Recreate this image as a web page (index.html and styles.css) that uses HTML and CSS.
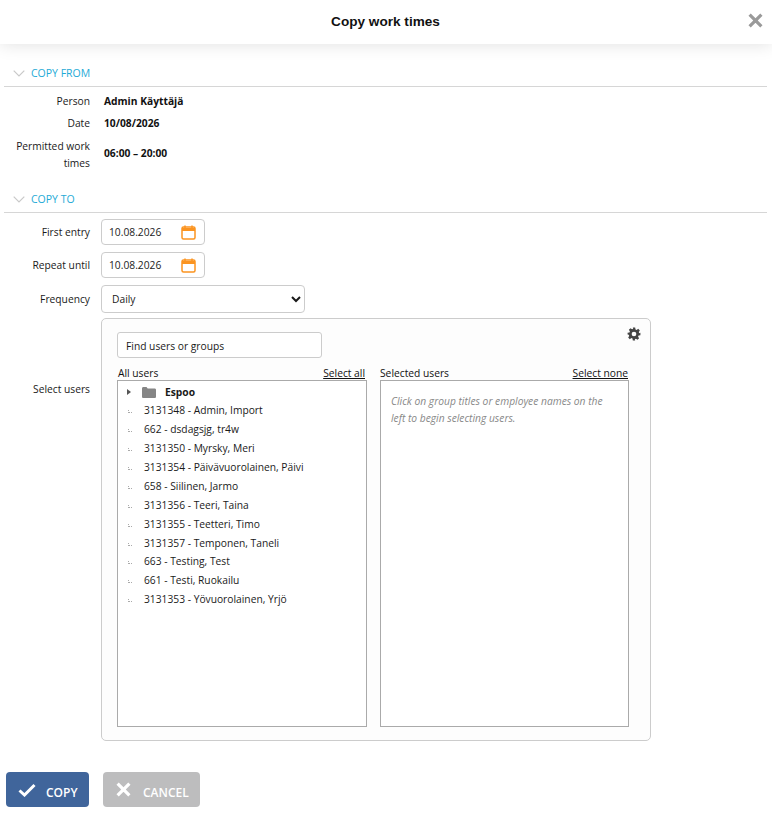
FILE: index.html
```html
<!DOCTYPE html>
<html lang="en">
<head>
    <meta charset="UTF-8">
    <meta name="viewport" content="width=device-width, initial-scale=1.0">
    <title>Copy work times</title>
    <link rel="stylesheet" href="styles.css">
</head>
<body>

    <!-- Dialog header -->
    <div class="dialog-header">
        <div class="dialog-title">Copy work times</div>
        <svg class="close-icon" viewBox="0 0 14 14" aria-label="Close"><path d="M1.5 1.5 12.5 12.5M12.5 1.5 1.5 12.5"/></svg>
    </div>

    <div class="dialog-body">
        <!-- Copy from -->
        <div class="section-title">
            <svg class="chevron" viewBox="0 0 12 7"><path d="M.7.7 6 6 11.3.7"/></svg>
            <span>COPY FROM</span>
        </div>
        <div class="info-rows">
            <div class="info-row info-person">
                <div class="row-label">Person</div>
                <div class="row-value">Admin Käyttäjä</div>
            </div>
            <div class="info-row info-date">
                <div class="row-label">Date</div>
                <div class="row-value">10/08/2026</div>
            </div>
            <div class="info-row info-times">
                <div class="row-label">Permitted work times</div>
                <div class="row-value">06:00 – 20:00</div>
            </div>
        </div>

        <!-- Copy to -->
        <div class="section-title">
            <svg class="chevron" viewBox="0 0 12 7"><path d="M.7.7 6 6 11.3.7"/></svg>
            <span>COPY TO</span>
        </div>
        <div class="form-rows">
            <div class="form-row">
                <div class="row-label">First entry</div>
                <div class="date-field">
                    <span>10.08.2026</span>
                    <svg class="calendar-icon" viewBox="0 0 15 15"><path d="M4 .5v3M11 .5v3"/><rect x="1" y="2" width="13" height="12" rx="1.5"/><path class="calendar-bar" d="M1 4.5h13"/></svg>
                </div>
            </div>
            <div class="form-row">
                <div class="row-label">Repeat until</div>
                <div class="date-field">
                    <span>10.08.2026</span>
                    <svg class="calendar-icon" viewBox="0 0 15 15"><path d="M4 .5v3M11 .5v3"/><rect x="1" y="2" width="13" height="12" rx="1.5"/><path class="calendar-bar" d="M1 4.5h13"/></svg>
                </div>
            </div>
            <div class="form-row">
                <div class="row-label">Frequency</div>
                <select class="frequency-select">
                    <option>Daily</option>
                </select>
            </div>
            <div class="form-row users-row">
                <div class="row-label">Select users</div>
                <div class="users-panel">
                    <svg class="gear-icon" viewBox="0 0 24 24"><path d="M10 1h4l.6 3.2 1.9.8 2.7-1.8 2.8 2.8-1.8 2.7.8 1.9L23 10v4l-3.2.6-.8 1.9 1.8 2.7-2.8 2.8-2.7-1.8-1.9.8L14 23h-4l-.6-3.2-1.9-.8-2.7 1.8L2 18l1.8-2.7-.8-1.9L1 13v-3l3.2-.6.8-1.9L3.2 4.8 6 2l2.7 1.8 1.9-.8z M12 8a4 4 0 1 0 0 8 4 4 0 0 0 0-8z" fill-rule="evenodd"/></svg>
                    <div class="user-search">Find users or groups</div>
                    <div class="user-lists">
                        <div class="user-col">
                            <div class="col-head">
                                <span>All users</span>
                                <a href="#">Select all</a>
                            </div>
                            <div class="user-box">
                                <div class="tree-group">
                                    <span class="tree-arrow"></span>
                                    <svg class="folder-icon" viewBox="0 0 14 11"><path d="M0 1.5C0 .7.6 0 1.3 0h3.2l1.2 1.5h7c.7 0 1.3.6 1.3 1.3V9.7c0 .7-.6 1.3-1.3 1.3H1.3C.6 11 0 10.4 0 9.7z"/></svg>
                                    <span>Espoo</span>
                                </div>
                                <div class="tree-item">3131348 - Admin, Import</div>
                                <div class="tree-item">662 - dsdagsjg, tr4w</div>
                                <div class="tree-item">3131350 - Myrsky, Meri</div>
                                <div class="tree-item">3131354 - Päivävuorolainen, Päivi</div>
                                <div class="tree-item">658 - Siilinen, Jarmo</div>
                                <div class="tree-item">3131356 - Teeri, Taina</div>
                                <div class="tree-item">3131355 - Teetteri, Timo</div>
                                <div class="tree-item">3131357 - Temponen, Taneli</div>
                                <div class="tree-item">663 - Testing, Test</div>
                                <div class="tree-item">661 - Testi, Ruokailu</div>
                                <div class="tree-item">3131353 - Yövuorolainen, Yrjö</div>
                            </div>
                        </div>
                        <div class="user-col selected-col">
                            <div class="col-head">
                                <span>Selected users</span>
                                <a href="#">Select none</a>
                            </div>
                            <div class="user-box">
                                <p class="empty-hint">Click on group titles or employee names on the left to begin selecting users.</p>
                            </div>
                        </div>
                    </div>
                </div>
            </div>
        </div>

        <!-- Actions -->
        <div class="actions">
            <button class="btn btn-copy">
                <svg viewBox="0 0 18 14"><path d="M1.5 7.5 6.5 12 16.5 2"/></svg>
                <span>COPY</span>
            </button>
            <button class="btn btn-cancel">
                <svg viewBox="0 0 14 14"><path d="M1.5 1.5 12.5 12.5M12.5 1.5 1.5 12.5"/></svg>
                <span>CANCEL</span>
            </button>
        </div>
    </div>

</body>
</html>
```

FILE: styles.css
```css
body {
    margin: 0;
    background-color: #fff;
    font-family: "Open Sans", "Noto Sans", sans-serif;
    font-size: 10.25px;
    color: #1a1a1a;
}

.dialog-header {
    height: 44px;
    display: flex;
    align-items: center;
    justify-content: center;
    position: relative;
    box-shadow: 0 0 18px rgba(0, 0, 0, 0.13);
    clip-path: inset(0 0 -20px 0);
}
.dialog-title {
    font-family: "Liberation Sans", Arial, sans-serif;
    font-size: 13.6px;
    font-weight: bold;
    color: #111;
    padding-bottom: 2px;
    padding-right: 1px;
}
.close-icon {
    position: absolute;
    right: 9px;
    top: 13px;
    width: 15px;
    height: 15px;
    fill: none;
    stroke: #9a9a9a;
    stroke-width: 3;
}

.dialog-body {
    padding: 2px 5px 0 4px;
}

.section-title {
    height: 29px;
    margin-top: 12px;
    padding-left: 9px;
    padding-top: 2px;
    display: flex;
    align-items: center;
    gap: 6px;
    border-bottom: 1px solid #d6d6d6;
    box-sizing: border-box;
    color: #1eaad6;
    font-size: 10.5px;
}
.chevron {
    width: 12px;
    height: 7px;
    fill: none;
    stroke: #c9c9c9;
    stroke-width: 1.2;
}

.row-label {
    width: 86px;
    flex-shrink: 0;
    text-align: right;
}
.row-value {
    font-weight: bold;
    color: #111;
}

.info-rows {
    padding-top: 3px;
}
.info-row {
    display: flex;
    align-items: center;
    gap: 14px;
    line-height: 17px;
}
.info-person {
    height: 22px;
}
.info-date {
    height: 22px;
}
.info-times {
    height: 38px;
}
.info-times .row-label {
    padding-top: 4px;
}

.form-rows {
    padding-top: 6px;
    display: flex;
    flex-direction: column;
    gap: 7px;
}
.form-row {
    display: flex;
    align-items: center;
    gap: 11px;
}
.date-field {
    width: 104px;
    height: 26px;
    padding: 0 8px 0 7px;
    display: flex;
    align-items: center;
    justify-content: space-between;
    box-sizing: border-box;
    border: 1px solid #ccc;
    border-radius: 4px;
}
.calendar-icon {
    width: 15px;
    height: 15px;
    fill: none;
    stroke: #fb9420;
    stroke-width: 1.5;
}
.calendar-bar {
    stroke-width: 3;
}
.frequency-select {
    width: 204px;
    height: 28px;
    padding: 0 6px;
    box-sizing: border-box;
    border: 1px solid #ccc;
    border-radius: 4px;
    background-color: #fff;
    font-family: inherit;
    font-size: 10.25px;
    color: #1a1a1a;
}

.users-row {
    align-items: flex-start;
    margin-top: -2px;
}
.users-row .row-label {
    padding-top: 64px;
}
.users-panel {
    width: 550px;
    height: 423px;
    padding: 13px 20px 13px 15px;
    box-sizing: border-box;
    position: relative;
    border: 1px solid #ccc;
    border-radius: 5px;
    background-color: #fdfdfd;
}
.gear-icon {
    position: absolute;
    top: 8px;
    right: 9px;
    width: 14px;
    height: 14px;
    fill: #444;
}
.user-search {
    width: 205px;
    height: 26px;
    padding-left: 8px;
    padding-top: 2px;
    display: flex;
    align-items: center;
    box-sizing: border-box;
    border: 1px solid #ccc;
    border-radius: 3px;
    background-color: #fff;
}
.user-lists {
    display: flex;
    gap: 13px;
    margin-top: 7px;
}
.user-col {
    width: 250px;
}
.selected-col {
    width: 249px;
}
.col-head {
    height: 15px;
    display: flex;
    align-items: flex-end;
    justify-content: space-between;
    color: #111;
    line-height: 14px;
}
.col-head a {
    color: #111;
    text-decoration: underline;
    margin-right: 1px;
}
.user-col:first-child .col-head {
    padding-left: 1px;
}
.user-col:first-child .col-head a {
    margin-right: 2px;
}
.user-box {
    height: 347px;
    padding-top: 2px;
    box-sizing: border-box;
    border: 1px solid #aaa;
    background-color: #fff;
}
.tree-group {
    height: 18.3px;
    padding-left: 9px;
    display: flex;
    align-items: center;
    font-weight: bold;
}
.tree-arrow {
    width: 0;
    height: 0;
    border-left: 4px solid #555;
    border-top: 3px solid transparent;
    border-bottom: 3px solid transparent;
}
.folder-icon {
    width: 14px;
    height: 11px;
    margin-left: 11px;
    margin-right: 9px;
    fill: #858585;
}
.tree-item {
    height: 18.9px;
    line-height: 19px;
    padding-left: 26px;
    position: relative;
}
.tree-item::before {
    content: "";
    position: absolute;
    left: 10px;
    top: 9px;
    width: 3px;
    height: 2px;
    border-left: 1px dotted #aaa;
    border-bottom: 1px dotted #aaa;
}
.empty-hint {
    margin: 10px 10px;
    font-style: italic;
    color: #888;
    line-height: 17px;
}

.actions {
    display: flex;
    gap: 14px;
    margin-top: 31px;
    padding-left: 2px;
}
.btn {
    height: 35px;
    padding: 0;
    display: flex;
    align-items: center;
    border: 0;
    border-radius: 4px;
    color: #fff;
    font-family: inherit;
    font-size: 12px;
    font-weight: 600;
}
.btn svg {
    fill: none;
    stroke: #fff;
    stroke-width: 3;
}
.btn-copy {
    width: 83px;
    padding-left: 12px;
    gap: 10px;
    background-color: #40659b;
}
.btn-copy svg {
    width: 18px;
    height: 14px;
}
.btn-cancel {
    width: 97px;
    padding-left: 13px;
    gap: 12px;
    background-color: #bdbdbe;
}
.btn-cancel svg {
    width: 15px;
    height: 15px;
}
.btn span {
    padding-top: 5px;
}
```
